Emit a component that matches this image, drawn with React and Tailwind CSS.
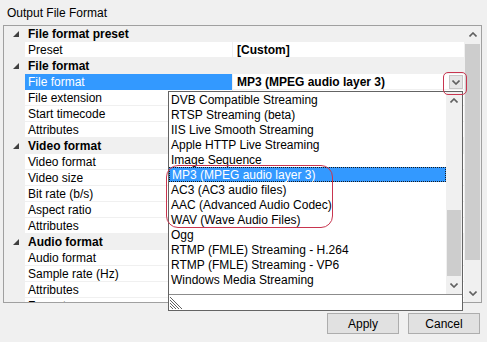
import React from 'react';

const font = { fontFamily: '"Liberation Sans", Arial, sans-serif' };

const groups = [
  { title: 'File format preset', items: [['Preset', '[Custom]']] },
  {
    title: 'File format',
    items: [['File format', 'MP3 (MPEG audio layer 3)', true], ['File extension'], ['Start timecode'], ['Attributes']],
  },
  {
    title: 'Video format',
    items: [['Video format'], ['Video size'], ['Bit rate (b/s)'], ['Aspect ratio'], ['Attributes']],
  },
  { title: 'Audio format', items: [['Audio format'], ['Sample rate (Hz)'], ['Attributes'], ['Format ...']] },
];

const options = [
  'DVB Compatible Streaming',
  'RTSP Streaming (beta)',
  'IIS Live Smooth Streaming',
  'Apple HTTP Live Streaming',
  'Image Sequence',
  'MP3 (MPEG audio layer 3)',
  'AC3 (AC3 audio files)',
  'AAC (Advanced Audio Codec)',
  'WAV (Wave Audio Files)',
  'Ogg',
  'RTMP (FMLE) Streaming - H.264',
  'RTMP (FMLE) Streaming - VP6',
  'Windows Media Streaming',
];

function Chevron({ up = false }) {
  return (
    <svg width="8" height="5" viewBox="0 0 8 5" className="block">
      <path
        d={up ? 'M0.5 4.5 L4 1 L7.5 4.5' : 'M0.5 0.5 L4 4 L7.5 0.5'}
        fill="none"
        stroke="#606060"
        strokeWidth="1.6"
      />
    </svg>
  );
}

function Expander() {
  return (
    <svg width="6" height="6" viewBox="0 0 6 6" className="block">
      <polygon points="6,0 6,6 0,6" fill="#404040" />
    </svg>
  );
}

function CategoryRow({ title }) {
  return (
    <div className="flex h-[16px] items-center bg-[#f0f0f0]">
      <div className="flex w-[21px] justify-center pl-[2px]">
        <Expander />
      </div>
      <span className="pl-[3px] text-[12px] font-bold leading-none text-black">{title}</span>
    </div>
  );
}

function ItemRow({ label, value, selected }) {
  return (
    <div className="flex h-[16px]">
      <div className="w-[21px] bg-[#f0f0f0]" />
      <div
        className={
          'flex w-[207px] items-center pl-[3px] text-[12px] leading-none ' +
          (selected ? 'bg-[#3399ff] text-white' : 'border-b border-[#f0f0f0] bg-white text-black')
        }
      >
        {label}
      </div>
      <div className="w-px bg-[#f0f0f0]" />
      <div className="relative flex flex-1 items-center border-b border-[#f0f0f0] bg-white pl-[4px] text-[12px] font-bold leading-none text-black">
        {value}
        {selected && (
          <div className="absolute right-[1px] top-[1px] flex h-[14px] w-[14px] items-center justify-center border border-[#c8c8c8] bg-[#e6e6e6]">
            <Chevron />
          </div>
        )}
      </div>
    </div>
  );
}

function ScrollBar({ thumbTop, thumbHeight, width }) {
  return (
    <div className="flex h-full flex-col bg-[#f0f0f0]" style={{ width }}>
      <div className="flex h-[17px] items-center justify-center">
        <Chevron up />
      </div>
      <div className="relative flex-1">
        <div
          className="absolute left-[1px] right-[1px] bg-[#cdcdcd]"
          style={{ top: thumbTop, height: thumbHeight }}
        />
      </div>
      <div className="flex h-[17px] items-center justify-center">
        <Chevron />
      </div>
    </div>
  );
}

function Grip() {
  return (
    <svg width="14" height="14" viewBox="0 0 14 14" className="block">
      {[2, 5, 8, 11].map((o) => (
        <line key={o} x1="0" y1={o} x2={14 - o} y2="14" stroke="#606060" strokeWidth="1" />
      ))}
    </svg>
  );
}

export default function App() {
  return (
    <div className="relative h-[342px] w-[487px] overflow-hidden bg-[#f0f0f0]" style={font}>
      <div className="flex h-[25px] items-center pl-[7px] text-[12px] text-black">Output File Format</div>

      <div className="ml-[3px] flex h-[278px] w-[479px] border border-[#a0a0a0] bg-[#f0f0f0]">
        <div className="flex-1 overflow-hidden">
          {groups.map((g) => (
            <div key={g.title}>
              <CategoryRow title={g.title} />
              {g.items.map(([label, value, selected], i) => (
                <ItemRow key={label + i} label={label} value={value} selected={selected} />
              ))}
            </div>
          ))}
        </div>
        <ScrollBar width={17} thumbTop={1} thumbHeight={216} />
      </div>

      <div className="mr-[7px] mt-[10px] flex justify-end gap-[9px]">
        <button className="h-[21px] w-[72px] border border-[#adadad] bg-[#e1e1e1] text-[12px] text-black">Apply</button>
        <button className="h-[21px] w-[72px] border border-[#adadad] bg-[#e1e1e1] text-[12px] text-black">Cancel</button>
      </div>

      {/* dropdown list */}
      <div className="absolute left-[168px] top-[91px] flex h-[220px] w-[295px] flex-col border border-[#646464] bg-white">
        <div className="flex h-[202px]">
          <div className="flex-1 pt-[0px]">
            {options.map((o, i) => (
              <div
                key={o}
                className={
                  'flex h-[15px] items-center pl-[2px] text-[12px] leading-none ' +
                  (i === 5 ? 'border border-dotted border-[#1a1a1a] bg-[#3399ff] pl-[1px] text-white' : 'text-black')
                }
              >
                {o}
              </div>
            ))}
          </div>
          <ScrollBar width={16} thumbTop={101} thumbHeight={66} />
        </div>
        <div className="flex flex-1 items-end border-t border-[#8c8c8c] pb-[1px] pl-[1px]">
          <Grip />
        </div>
      </div>

      {/* annotations */}
      <div className="pointer-events-none absolute left-[443px] top-[72px] h-[23px] w-[24px] rounded-[5px] border border-[#c8354f]" />
      <div className="pointer-events-none absolute left-[166px] top-[165px] h-[63px] w-[167px] rounded-[12px] border border-[#c8354f]" />
    </div>
  );
}
